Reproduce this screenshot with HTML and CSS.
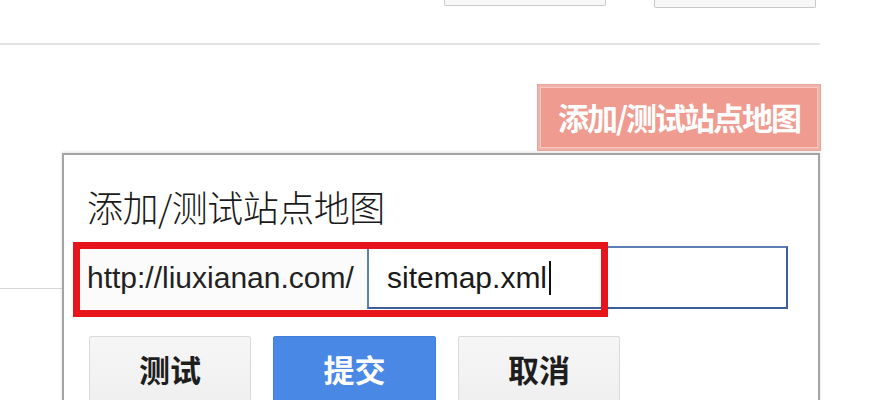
FILE: index.html
```html
<!DOCTYPE html>
<html lang="zh-CN">
<head>
<meta charset="utf-8">
<title>添加/测试站点地图</title>
<link rel="stylesheet" href="styles.css">
</head>
<body>
<div class="page">
  <div class="topbar">
    <span class="top-btn top-btn-a"></span>
    <span class="top-btn top-btn-b"></span>
  </div>
  <div class="rule"></div>
  <div class="actions">
    <button class="add-btn">添加/测试站点地图</button>
  </div>
  <div class="bg-line"></div>
  <div class="dialog">
    <h1 class="dialog-title">添加/测试站点地图</h1>
    <div class="url-row">
      <span class="url-prefix">http://liuxianan.com/</span>
      <span class="url-input">sitemap.xml<span class="caret"></span></span>
      <span class="highlight"></span>
    </div>
    <div class="btn-row">
      <button class="btn">测试</button>
      <button class="btn btn-primary">提交</button>
      <button class="btn">取消</button>
    </div>
  </div>
</div>
</body>
</html>
```

FILE: styles.css
```css
html, body {
  margin: 0;
  padding: 0;
  background: #ffffff;
  overflow: hidden;
}
.page {
  position: relative;
  width: 888px;
  height: 400px;
  font-family: "Liberation Sans", "Noto Sans CJK SC", sans-serif;
}
.topbar {
  display: flex;
  justify-content: flex-end;
  align-items: flex-start;
  gap: 48px;
  width: 816px;
  height: 43px;
}
.top-btn {
  display: block;
  width: 160px;
  background: #f7f7f7;
  border: 1px solid #c9c9c9;
  border-top: none;
  border-radius: 0 0 2px 2px;
}
.top-btn-a { height: 5px; }
.top-btn-b { height: 7px; }
.rule {
  width: 820px;
  height: 2px;
  background: #e4e4e4;
}
.actions {
  display: flex;
  justify-content: flex-end;
  width: 820px;
  margin-top: 40px;
}
.add-btn {
  width: 282px;
  height: 65px;
  margin: 0;
  padding: 0 0 2px;
  background: #ef9b90;
  border: 2px solid #f2b2a9;
  box-shadow: inset 0 0 0 1px #f7c8c1, 0 0 0 1px #e9a59c;
  color: #ffffff;
  font-family: "Noto Sans CJK SC", sans-serif;
  font-weight: 700;
  font-size: 31px;
  letter-spacing: -2px;
  line-height: 1;
}
.bg-line {
  position: absolute;
  left: 0;
  top: 288px;
  width: 62px;
  height: 1px;
  background: #d8d8d8;
}
.dialog {
  position: relative;
  margin: 3px 0 0 62px;
  width: 754px;
  height: 260px;
  background: #ffffff;
  border: 2px solid #a4a4a4;
  border-bottom: none;
  box-shadow: 0 -1px 3px rgba(0, 0, 0, 0.12);
}
.dialog-title {
  margin: 0;
  padding: 29px 0 0 23px;
  height: 44px;
  font-family: "Noto Sans CJK SC", sans-serif;
  font-weight: 300;
  font-size: 36px;
  letter-spacing: -0.5px;
  line-height: 44px;
  color: #1a1a1a;
}
.url-row {
  position: relative;
  display: flex;
  margin: 18px 0 0 16px;
  height: 63px;
}
.url-prefix {
  display: flex;
  align-items: center;
  width: 280px;
  padding-left: 7px;
  background: #fbfbfb;
  font-size: 30px;
  color: #222222;
}
.url-input {
  display: flex;
  align-items: center;
  width: 399px;
  padding-left: 18px;
  border: 2px solid #4a6ea8;
  border-color: #5b7fb6 #3c5f99 #3c5f99 #5b7fb6;
  font-size: 30px;
  color: #1a1a1a;
}
.caret {
  display: inline-block;
  width: 2px;
  height: 34px;
  margin-left: 2px;
  background: #111111;
}
.highlight {
  position: absolute;
  left: -7px;
  top: -4px;
  width: 535px;
  height: 75px;
  box-sizing: border-box;
  border: 7px solid #e8141b;
}
.btn-row {
  display: flex;
  gap: 22px;
  margin: 27px 0 0 25px;
}
.btn {
  width: 162px;
  height: 70px;
  margin: 0;
  padding: 0 0 6px;
  background: linear-gradient(#f6f6f6, #efefef);
  border: 1px solid #dadada;
  border-radius: 2px;
  color: #1e1e1e;
  font-family: "Noto Sans CJK SC", sans-serif;
  font-weight: 700;
  font-size: 31px;
  line-height: 1;
}
.btn-primary {
  width: 163px;
  background: #4a88e6;
  border-color: #3f7ed9;
  color: #ffffff;
}
```
